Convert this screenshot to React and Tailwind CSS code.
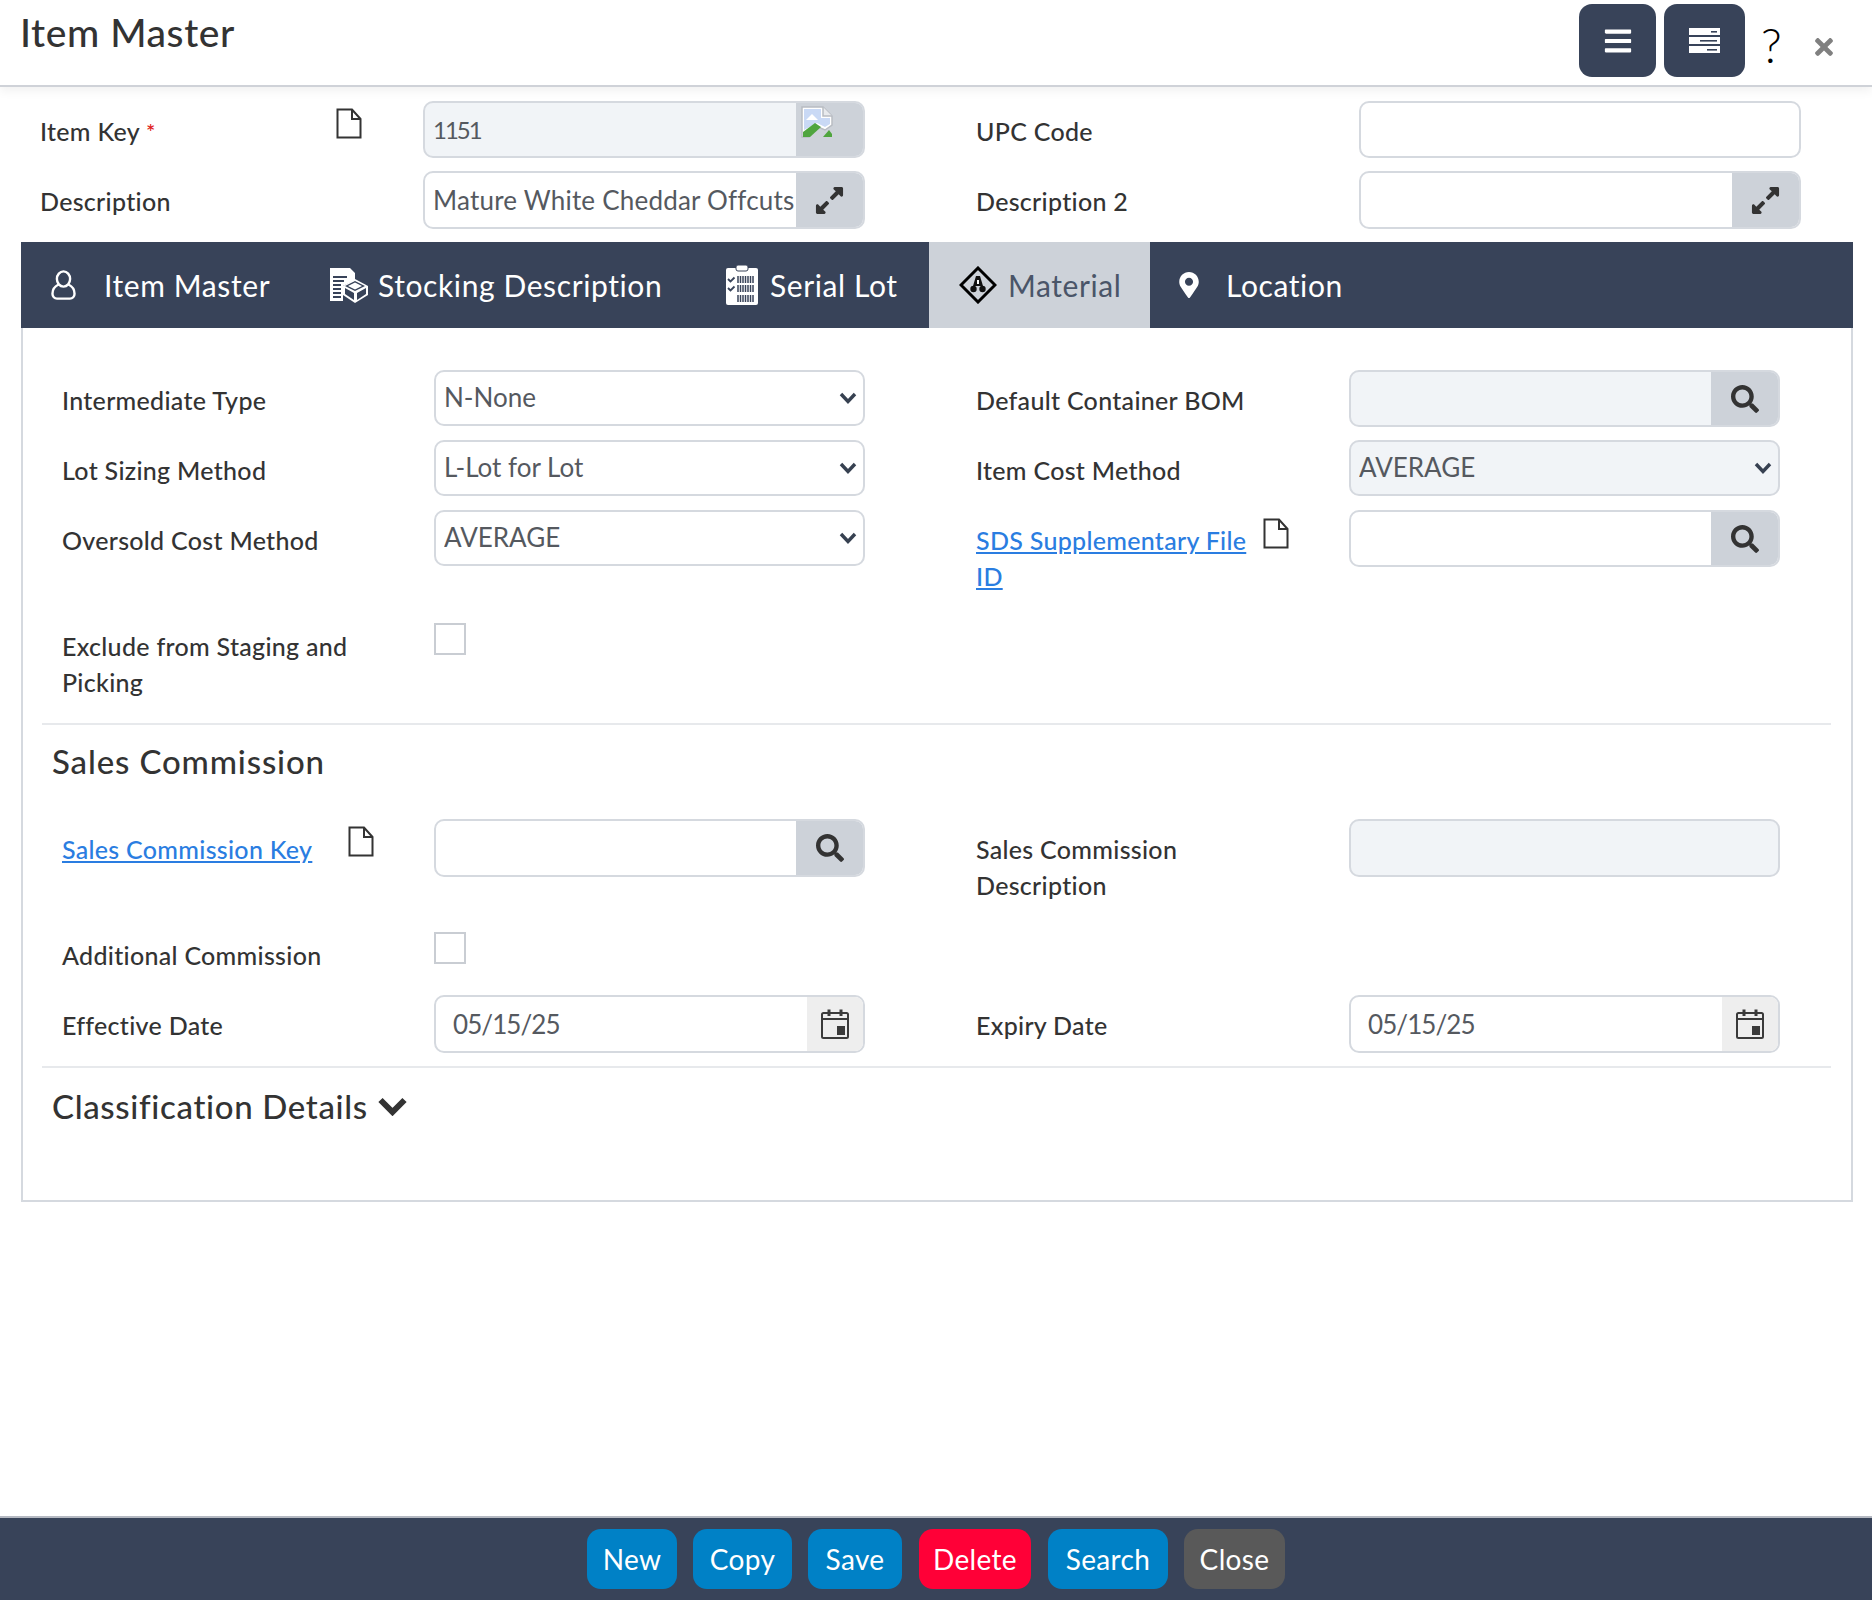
import React from "react";
import { FaExpandAlt, FaSearch, FaTimes, FaMapMarkerAlt, FaBars } from "react-icons/fa";

const FileIcon = () => (
  <svg width="26" height="31" viewBox="0 0 26 31" fill="none" stroke="#333333" strokeWidth="2">
    <path d="M1.5 1.5 H16 L24.5 11 V29.5 H1.5 Z" />
    <path d="M16 1.5 V11 H24.5" />
  </svg>
);

const BrokenImage = () => (
  <svg width="32" height="32" viewBox="0 0 32 32">
    <path d="M1 1 H22 L31 10 V19 L24 24 L17 21 L8 31 H1 Z" fill="#ffffff" stroke="#b8bcc2" strokeWidth="1.5" />
    <path d="M22 1 V10 H31" fill="#e8eaed" stroke="#b8bcc2" strokeWidth="1.5" />
    <path d="M3 3 H20 V12 H29 V18 L24 21 L16 17 L3 24 Z" fill="#c9d9f5" />
    <path d="M5 14 L11 8 L17 14 Z" fill="#ffffff" />
    <path d="M2 31 L2 26 L14 17 L20 21 L9 31 Z" fill="#4fa53e" />
    <path d="M22 31 L28 24 L31 28 V31 Z" fill="#4fa53e" />
  </svg>
);

const CalendarIcon = () => (
  <svg width="28" height="30" viewBox="0 0 28 30" fill="none" stroke="#3a3a3a" strokeWidth="2">
    <rect x="1" y="4" width="26" height="25" rx="1.5" />
    <path d="M1 10 H27" />
    <path d="M8 0.5 V7 M20 0.5 V7" strokeWidth="3" />
    <rect x="16" y="17" width="8" height="9" fill="#3a3a3a" stroke="none" />
  </svg>
);

const SelectChevron = () => (
  <svg className="absolute right-[8px] top-1/2 -translate-y-1/2 pointer-events-none" width="18" height="12" viewBox="0 0 18 12" fill="none" stroke="#374151" strokeWidth="3.4">
    <path d="M2 2 L9 9.5 L16 2" />
  </svg>
);

const HeadingChevron = () => (
  <svg width="29" height="19" viewBox="0 0 29 19" fill="none" stroke="#333333" strokeWidth="6">
    <path d="M2.5 3 L14.5 15 L26.5 3" />
  </svg>
);

const ServerIcon = () => (
  <svg width="31" height="25" viewBox="0 0 31 25">
    <rect x="0" y="0" width="31" height="7" fill="#ffffff" />
    <rect x="0" y="9" width="31" height="7" fill="#ffffff" />
    <rect x="0" y="18" width="31" height="7" fill="#ffffff" />
    <rect x="22" y="3" width="6" height="1.6" fill="#384359" />
    <rect x="11" y="12" width="17" height="1.6" fill="#384359" />
    <rect x="18" y="21" width="10" height="1.6" fill="#384359" />
  </svg>
);

const UserIcon = () => (
  <svg width="25" height="30" viewBox="0 0 25 30" fill="none" stroke="#ffffff" strokeWidth="2.4">
    <ellipse cx="12.5" cy="9" rx="6.6" ry="7.6" />
    <path d="M7.5 14.5 C3.5 16.5 1.5 19.5 1.5 23.5 V24 A4.5 4.5 0 0 0 6 28.6 H19 A4.5 4.5 0 0 0 23.5 24 V23.5 C23.5 19.5 21.5 16.5 17.5 14.5" />
  </svg>
);

const StockingIcon = () => (
  <svg width="39" height="35" viewBox="0 0 39 35">
    <path d="M0 0 H20 L25 5 V12 L13 18 V33 H0 Z" fill="#ffffff" />
    <path d="M3 9 H17 M3 13 H14 M3 17 H11 M3 21 H11 M3 25 H11 M3 29 H11" stroke="#384359" strokeWidth="1.8" />
    <path d="M25 11 L38 18 V27 L25 35 L13 27 V18 Z" fill="#ffffff" />
    <path d="M25 13 L35 18 L25 23 L15 18 Z M15 20 L24 25 V32 L15 26 Z M36 20 L27 25 V32 L36 26 Z" fill="#384359" />
    <path d="M25 14.5 L32 18 L25 21.5 L18 18 Z" fill="#ffffff" />
  </svg>
);

const SerialIcon = () => (
  <svg width="32" height="40" viewBox="0 0 32 40">
    <rect x="0" y="3" width="32" height="37" rx="2" fill="#ffffff" />
    <rect x="10" y="0" width="12" height="6" rx="2" fill="#ffffff" stroke="#384359" strokeWidth="1" />
    <path d="M2 14 L4.5 16.5 L8.5 12.5 M2 23 L4.5 25.5 L8.5 21.5" fill="none" stroke="#384359" strokeWidth="1.8" />
    <path d="M12 11 V18 M14.5 11 V18 M17 11 V18 M19.5 11 V18 M22 11 V18 M24.5 11 V18 M27 11 V18 M12 20 V27 M14.5 20 V27 M17 20 V27 M19.5 20 V27 M22 20 V27 M24.5 20 V27 M27 20 V27 M12 30 V37 M14.5 30 V37 M17 30 V37 M19.5 30 V37 M22 30 V37 M24.5 30 V37 M27 30 V37" stroke="#384359" strokeWidth="1.5" />
  </svg>
);

const MaterialIcon = () => (
  <svg width="38" height="38" viewBox="0 0 38 38">
    <path d="M19 2 L36 19 L19 36 L2 19 Z" fill="none" stroke="#000000" strokeWidth="3" />
    <path d="M17 10 H21 L24 20 H14 Z" fill="#111111" />
    <circle cx="14.5" cy="23" r="3.2" fill="#111111" />
    <circle cx="23.5" cy="23" r="3.2" fill="#111111" />
    <rect x="18" y="14" width="2" height="4" fill="#ffffff" />
  </svg>
);

const labelCls = "pt-[13px] text-[25px] leading-[35.5px] tracking-[0.012em] font-medium text-[#333333]";
const linkCls = "text-[#2a7de1] underline";

const Addon = ({ children }) => (
  <div className="flex w-[67px] shrink-0 items-center justify-center bg-[#cdd2d9] text-[#333333]">
    {children}
  </div>
);

const CalendarAddon = () => (
  <div className="flex w-[56px] shrink-0 items-center justify-center bg-[#eeeeee]"><CalendarIcon /></div>
);

const TextBox = ({ value = "", disabled, addon, h = "h-[57px]", inset = "pl-[8px]", text = "text-[26px] tracking-[0.008em]" }) => (
  <div className={`flex ${h} overflow-hidden rounded-[10px] border-2 border-[#d5d9df] ${disabled ? "bg-[#f1f4f7]" : "bg-white"}`}>
    <input readOnly defaultValue={value} className={`h-full min-w-0 flex-1 bg-transparent ${inset} ${text} text-[#55595f] outline-none`} />
    {addon}
  </div>
);

const SelectBox = ({ value, disabled }) => (
  <div className="relative h-[56px]">
    <select defaultValue={value} className={`h-full w-full appearance-none rounded-[10px] border-2 border-[#d5d9df] px-[8px] pb-[2px] text-[26px] text-[#55595f] outline-none ${disabled ? "bg-[#f1f4f7]" : "bg-white"}`}>
      <option>{value}</option>
    </select>
    <SelectChevron />
  </div>
);

const CheckBox = () => (
  <div className="mt-[7px] h-[32px] w-[32px] border-2 border-[#c9cdd3] bg-white" />
);

// one form row: left and right label + control
const Row = ({ className, left, right }) => (
  <div className={`flex pl-[20px] ${className}`}>
    <div className="flex w-[803px] shrink-0">{left}</div>
    <div className="ml-[111px] flex flex-1">{right}</div>
  </div>
);

const Cell = ({ label, children, right }) => (
  <>
    <div className={`${labelCls} ${right ? "w-[373px]" : "w-[372px]"} shrink-0`}>{label}</div>
    <div className="w-[431px] shrink-0">{children}</div>
  </>
);

const Tab = ({ icon, text, className, active }) => (
  <div className={`flex h-full items-center text-[30px] tracking-[0.02em] ${active ? "bg-[#cdd2d9] text-[#4a5568]" : "text-white"} ${className}`}>
    {icon}
    <span>{text}</span>
  </div>
);

const ActionBtn = ({ children, className }) => (
  <button className={`h-[60px] rounded-[14px] text-[28px] tracking-[0.012em] text-white ${className}`}>{children}</button>
);

const Divider = () => <div className="h-[2px] bg-[#e7e9ec]" />;

export default function App() {
  return (
    <div className="flex h-[1600px] flex-col bg-white font-['Lato',sans-serif]">
      {/* header */}
      <div className="flex h-[87px] shrink-0 items-start justify-between border-b-2 border-[#cfd2d8] shadow-[0_4px_10px_rgba(0,0,0,0.06)]">
        <h1 className="pl-[20px] pt-[9px] text-[39px] leading-[46px] tracking-[0.015em] font-medium text-[#333333]">Item Master</h1>
        <div className="flex items-start pt-[4px]">
          <button className="flex h-[73px] w-[77px] items-center justify-center rounded-[13px] bg-[#384359] text-white"><FaBars size={30} /></button>
          <button className="ml-[8px] flex h-[73px] w-[81px] items-center justify-center rounded-[13px] bg-[#384359]"><ServerIcon /></button>
          <span className="ml-[16px] mt-[14px] w-[25px] text-[48px] leading-[54px] font-light text-black">?</span>
          <span className="ml-[25px] mt-[30px] mr-[35px] text-[#808080]"><FaTimes size={26} /></span>
        </div>
      </div>

      {/* top fields */}
      <div className="pl-[40px] pt-[14px]">
        <div className="flex h-[70px]">
          <div className="flex w-[825px] shrink-0">
            <div className={`${labelCls} w-[296px] shrink-0`}>Item Key <span className="align-top text-[22px] text-[#e02020]">*</span></div>
            <div className="w-[87px] shrink-0 pt-[7px]"><FileIcon /></div>
            <div className="w-[442px] shrink-0">
              <TextBox value="1151" disabled text="text-[24px] tracking-[-2px]" addon={<div className="flex w-[67px] shrink-0 items-start bg-[#cdd2d9] pl-[5px] pt-[3px]"><BrokenImage /></div>} />
            </div>
          </div>
          <div className="ml-[111px] flex">
            <div className={`${labelCls} w-[383px] shrink-0`}>UPC Code</div>
            <div className="w-[442px] shrink-0"><TextBox /></div>
          </div>
        </div>
        <div className="flex h-[71px]">
          <div className="flex w-[825px] shrink-0">
            <div className={`${labelCls} w-[383px] shrink-0`}>Description</div>
            <div className="w-[442px] shrink-0">
              <TextBox value="Mature White Cheddar Offcuts" h="h-[58px]" addon={<Addon><FaExpandAlt size={31} /></Addon>} />
            </div>
          </div>
          <div className="ml-[111px] flex">
            <div className={`${labelCls} w-[383px] shrink-0`}>Description 2</div>
            <div className="w-[442px] shrink-0">
              <TextBox h="h-[58px]" addon={<Addon><FaExpandAlt size={31} /></Addon>} />
            </div>
          </div>
        </div>
      </div>

      {/* tabs */}
      <div className="mx-[21px] flex h-[86px] w-[1832px] shrink-0 bg-[#384359]">
        <Tab className="w-[279px] pl-[30px]" icon={<span className="mr-[28px] flex"><UserIcon /></span>} text="Item Master" />
        <Tab className="w-[391px] pl-[30px]" icon={<span className="mr-[9px] flex"><StockingIcon /></span>} text="Stocking Description" />
        <Tab className="w-[238px] pl-[35px]" icon={<span className="mr-[12px] flex"><SerialIcon /></span>} text="Serial Lot" />
        <Tab active className="w-[221px] pl-[30px]" icon={<span className="mr-[11px] flex"><MaterialIcon /></span>} text="Material" />
        <Tab className="pl-[26px]" icon={<span className="mr-[24px] flex"><FaMapMarkerAlt size={26} /></span>} text="Location" />
      </div>

      {/* material panel */}
      <div className="mx-[21px] h-[874px] w-[1832px] shrink-0 border-x-2 border-b-2 border-[#d5d9df] pl-[19px] pr-[20px] pt-[42px]">
        <Row
          className="h-[70px]"
          left={<Cell label="Intermediate Type"><SelectBox value="N-None" /></Cell>}
          right={<Cell right label="Default Container BOM"><TextBox disabled addon={<Addon><FaSearch size={28} /></Addon>} /></Cell>}
        />
        <Row
          className="h-[70px]"
          left={<Cell label="Lot Sizing Method"><SelectBox value="L-Lot for Lot" /></Cell>}
          right={<Cell right label="Item Cost Method"><SelectBox value="AVERAGE" disabled /></Cell>}
        />
        <Row
          className="h-[106px]"
          left={<Cell label="Oversold Cost Method"><SelectBox value="AVERAGE" /></Cell>}
          right={
            <Cell
              right
              label={
                <div className="flex justify-between pr-[60px]">
                  <span className={`${linkCls} w-[280px]`}>SDS Supplementary File ID</span>
                  <span className="-mt-[5px]"><FileIcon /></span>
                </div>
              }
            >
              <TextBox addon={<Addon><FaSearch size={28} /></Addon>} />
            </Cell>
          }
        />
        <Row
          className="h-[107px]"
          left={<Cell label={<span className="block w-[300px]">Exclude from Staging and Picking</span>}><CheckBox /></Cell>}
        />
        <Divider />
        <h2 className="flex h-[94px] items-start pl-[10px] pt-[15px] text-[33px] leading-[42px] tracking-[0.026em] font-medium text-[#333333]">Sales Commission</h2>
        <Row
          className="h-[106px]"
          left={
            <Cell
              label={
                <div className="flex">
                  <span className={linkCls}>Sales Commission Key</span>
                  <span className="-mt-[6px] ml-[36px]"><FileIcon /></span>
                </div>
              }
            >
              <TextBox h="h-[58px]" addon={<Addon><FaSearch size={28} /></Addon>} />
            </Cell>
          }
          right={<Cell right label={<span className="block w-[240px]">Sales Commission Description</span>}><TextBox disabled h="h-[58px]" /></Cell>}
        />
        <Row className="h-[70px]" left={<Cell label="Additional Commission"><CheckBox /></Cell>} />
        <Row
          className="h-[71px]"
          left={<Cell label="Effective Date"><TextBox value="05/15/25" h="h-[58px]" inset="px-[17px]" text="text-[26px] tracking-[-0.035em]" addon={<CalendarAddon />} /></Cell>}
          right={<Cell right label="Expiry Date"><TextBox value="05/15/25" h="h-[58px]" inset="px-[17px]" text="text-[26px] tracking-[-0.035em]" addon={<CalendarAddon />} /></Cell>}
        />
        <Divider />
        <h2 className="flex h-[77px] items-center gap-[10px] pl-[10px] text-[33px] tracking-[0.02em] font-medium text-[#333333]">
          Classification Details <HeadingChevron />
        </h2>
      </div>

      {/* footer actions */}
      <div className="mt-auto flex h-[84px] shrink-0 items-center justify-center gap-[16px] border-t-2 border-[#b5b9c2] bg-[#384359]">
        <ActionBtn className="w-[90px] bg-[#0081c6]">New</ActionBtn>
        <ActionBtn className="w-[99px] bg-[#0081c6]">Copy</ActionBtn>
        <ActionBtn className="w-[94px] bg-[#0081c6]">Save</ActionBtn>
        <ActionBtn className="ml-px w-[112px] bg-[#ff0037]">Delete</ActionBtn>
        <ActionBtn className="ml-px w-[120px] bg-[#0081c6]">Search</ActionBtn>
        <ActionBtn className="w-[101px] bg-[#595959]">Close</ActionBtn>
      </div>
    </div>
  );
}
